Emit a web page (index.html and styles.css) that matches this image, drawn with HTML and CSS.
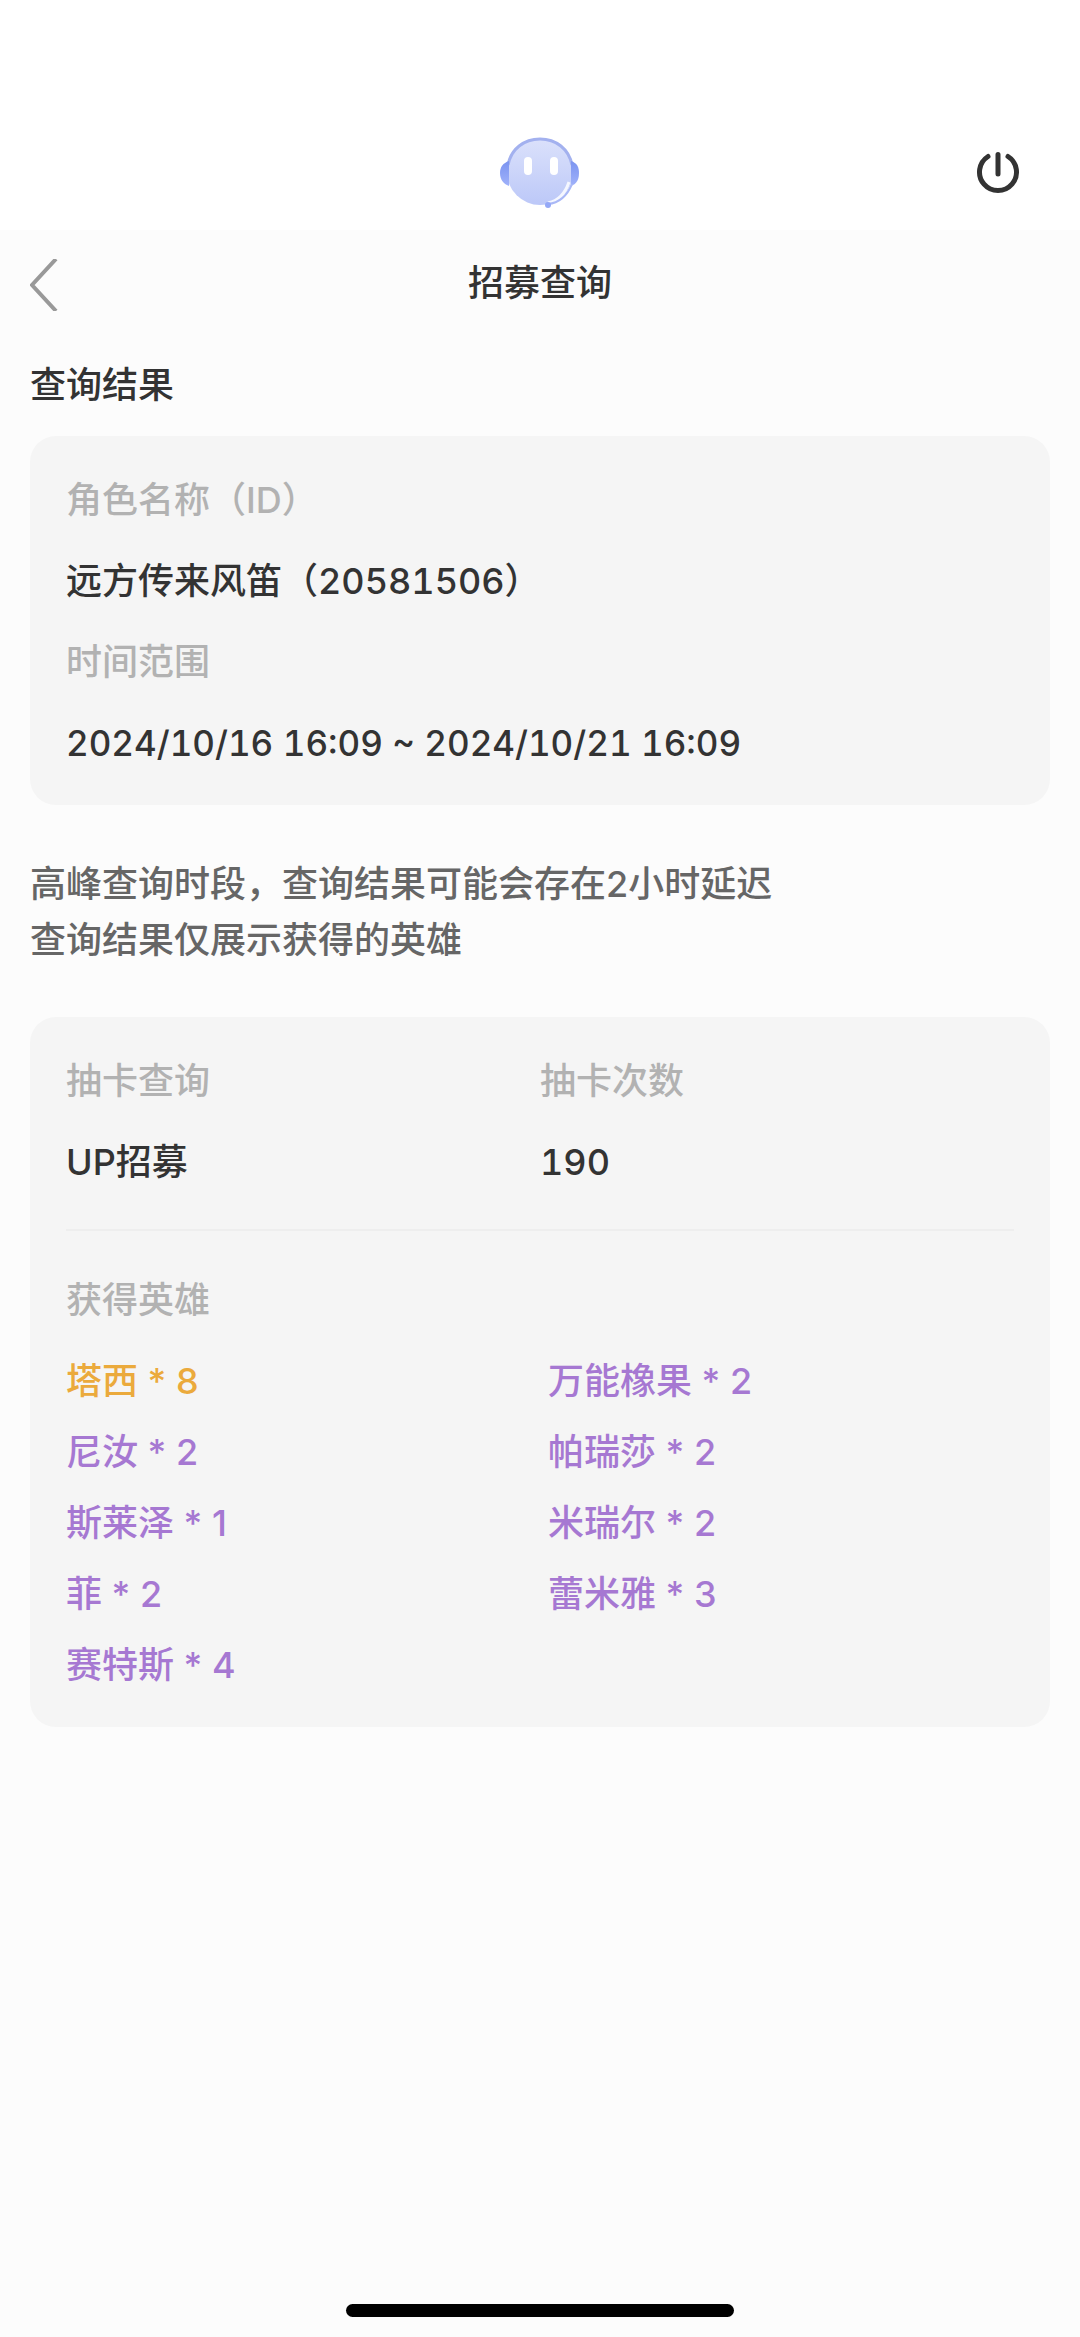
FILE: index.html
```html
<!DOCTYPE html>
<html lang="zh-CN">
<head>
    <meta charset="UTF-8">
    <meta name="viewport" content="width=device-width, initial-scale=1.0">
    <title>招募查询</title>
    <link rel="stylesheet" href="styles.css">
</head>
<body>
    <header class="topbar">
        <svg class="robot" viewBox="0 0 84 84" aria-hidden="true">
            <defs>
                <linearGradient id="face" x1="0" y1="0" x2="0" y2="1">
                    <stop offset="0" stop-color="#dbe1fb"/>
                    <stop offset="1" stop-color="#bcc8f8"/>
                </linearGradient>
                <linearGradient id="ear" x1="0" y1="0" x2="0" y2="1">
                    <stop offset="0" stop-color="#7b94f0"/>
                    <stop offset="1" stop-color="#a0b2fa"/>
                </linearGradient>
            </defs>
            <circle cx="42" cy="42" r="33" fill="url(#face)"/>
            <path d="M10 35C13 19 26 9 42 9s29 10 32 26" fill="none" stroke="#a3b1ef" stroke-width="3"/>
            <path d="M11 31C5 33 2 37 2 43s3 11 9 13z" fill="url(#ear)"/>
            <path d="M73 31c6 2 8 6 8 12s-2 11-8 13z" fill="url(#ear)"/>
            <path d="M71 52C67 64 60 71 50 73" fill="none" stroke="#f5f7ff" stroke-width="3"/>
            <path d="M74 54C69 66 61 73 50 74" fill="none" stroke="#a9b8f6" stroke-width="2"/>
            <ellipse cx="50" cy="75" rx="3" ry="3" fill="#94a8f7"/>
            <rect x="26" y="27" width="8" height="18" rx="4" fill="#fff"/>
            <rect x="52" y="27" width="8" height="18" rx="4" fill="#fff"/>
        </svg>
        <button class="power" type="button" aria-label="退出">
            <svg viewBox="0 0 48 48">
                <path d="M14 8.500A18.500 18.500 0 1 0 34 8.500M24 6.500V26"/>
            </svg>
        </button>
    </header>

    <main class="page">
        <div class="title-row">
            <a class="back" href="#" aria-label="返回">
                <svg viewBox="0 0 28 52"><path d="M26 0L2 26l24 26"/></svg>
            </a>
            <h1>招募查询</h1>
        </div>

        <h2>查询结果</h2>

        <dl class="card">
            <dt>角色名称（ID）</dt>
            <dd>远方传来风笛（20581506）</dd>
            <dt>时间范围</dt>
            <dd class="range">2024/10/16 16:09 ~ 2024/10/21 16:09</dd>
        </dl>

        <p class="note">高峰查询时段，查询结果可能会存在2小时延迟<br>查询结果仅展示获得的英雄</p>

        <section class="card">
            <div class="summary">
                <dl class="field">
                    <dt>抽卡查询</dt>
                    <dd>UP招募</dd>
                </dl>
                <dl class="field">
                    <dt>抽卡次数</dt>
                    <dd>190</dd>
                </dl>
            </div>
            <h3>获得英雄</h3>
            <ul class="heroes">
                <li class="gold">塔西 * 8</li>
                <li>万能橡果 * 2</li>
                <li>尼汝 * 2</li>
                <li>帕瑞莎 * 2</li>
                <li>斯莱泽 * 1</li>
                <li>米瑞尔 * 2</li>
                <li>菲 * 2</li>
                <li>蕾米雅 * 3</li>
                <li>赛特斯 * 4</li>
            </ul>
        </section>
    </main>

    <div class="home-bar"></div>
</body>
</html>
```
FILE: styles.css
```css
* {
    box-sizing: border-box;
    margin: 0;
    padding: 0;
}
body {
    display: flex;
    flex-direction: column;
    min-height: 100vh;
    background-color: #fcfcfc;
    color: #333;
    font-family: 'Inter', 'Noto Sans CJK SC', sans-serif;
    font-size: 36px;
    font-weight: 500;
    line-height: 53px;
}
h1, h2, h3 {
    font-size: 36px;
    font-weight: 500;
}
svg {
    display: block;
}

/* 顶部栏 */
.topbar {
    display: grid;
    grid-template-columns: 1fr auto 1fr;
    align-items: center;
    padding: 130px 58px 16px;
    background-color: #fff;
}
.robot {
    grid-column: 2;
    width: 84px;
    height: 84px;
}
.power {
    justify-self: end;
    border: none;
    background: none;
    cursor: pointer;
}
.power svg {
    width: 48px;
    height: 48px;
    fill: none;
    stroke: #333;
    stroke-width: 5;
    stroke-linecap: round;
}

.page {
    flex: 1;
    padding: 25px 30px;
}
.title-row {
    display: grid;
    grid-template-columns: 1fr auto 1fr;
    align-items: center;
    margin-bottom: 48px;
}
.back svg {
    width: 28px;
    height: 52px;
    margin-top: 4px;
    fill: none;
    stroke: #999;
    stroke-width: 4;
}
h2 {
    margin-bottom: 24px;
}

/* 卡片 */
.card {
    display: flex;
    flex-direction: column;
    gap: 28px;
    padding: 38px 36px 35px;
    border-radius: 26px;
    background-color: #f5f5f5;
}
dt, h3 {
    color: #b2b2b2;
}
dd {
    font-variant-numeric: tabular-nums;
}
.range {
    font-size: 35px;
}
.note {
    margin: 51px 0 49px;
    color: #666;
    line-height: 56px;
}
.summary {
    display: grid;
    grid-template-columns: 1fr 1fr;
    margin-bottom: 15px;
    padding-bottom: 40px;
    border-bottom: 2px solid #eee;
}
.field {
    display: flex;
    flex-direction: column;
    gap: 28px;
}
.heroes {
    display: grid;
    grid-template-columns: 1fr 1fr;
    gap: 18px 16px;
    list-style: none;
    color: #a678d2;
}
.gold {
    color: #ebaa3c;
}

.home-bar {
    width: 36%;
    height: 13px;
    margin: 0 auto 20px;
    border-radius: 7px;
    background-color: #000;
}
```
